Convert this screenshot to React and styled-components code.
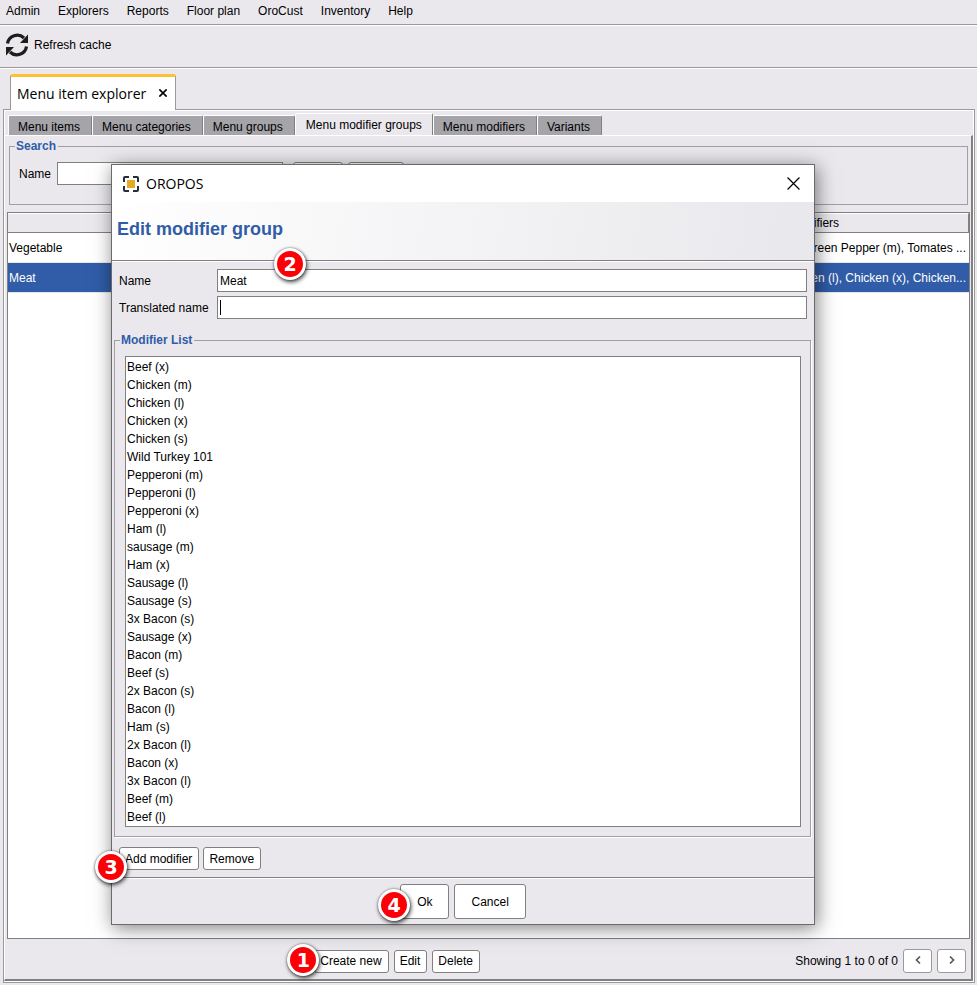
import React from "react";
import styled, { createGlobalStyle } from "styled-components";

const GlobalStyle = createGlobalStyle`
  * {
    box-sizing: border-box;
  }

  body {
    margin: 0;
    background-color: #eae8ed;
    color: #000;
    font-family: "Liberation Sans", Arial, sans-serif;
    font-size: 12px;
    line-height: 16px;
  }

  button,
  input {
    font: inherit;
    color: inherit;
  }
`;

const Screen = styled.div`
  position: relative;
  display: flex;
  flex-direction: column;
  min-height: 100vh;
`;

const MenuBar = styled.nav`
  display: flex;
  gap: 18px;
  height: 25px;
  padding: 2px 6px 4px;
  border-bottom: 1px solid #999;
`;

const MenuButton = styled.button`
  padding: 0;
  border: none;
  background: none;
`;

const Toolbar = styled.div`
  display: flex;
  align-items: center;
  height: 43px;
  padding: 0 6px 4px;
  border-top: 1px solid #fff;
  border-bottom: 1px solid #999;
`;

const ToolbarButton = styled.button`
  display: flex;
  align-items: center;
  gap: 6px;
  padding: 0;
  border: none;
  background: none;
`;

const ExplorerTabs = styled.div`
  display: flex;
  padding: 5px 10px 0;
  border-top: 1px solid #fff;
`;

const ExplorerTab = styled.div`
  z-index: 1;
  display: flex;
  align-items: center;
  gap: 13px;
  height: 36px;
  margin-bottom: -1px;
  padding: 0 8px 0 6px;
  border: 1px solid #999;
  border-top: 3px solid #fdc133;
  border-bottom: none;
  border-radius: 3px 3px 0 0;
  background-color: #fff;
  font-family: "Open Sans", "Noto Sans", sans-serif;
  font-size: 14px;
`;

const TabClose = styled.button`
  display: flex;
  padding: 0 0 2px;
  border: none;
  background: none;
`;

const ExplorerPanel = styled.div`
  flex: 1;
  display: flex;
  flex-direction: column;
  margin: 0 2px 2px 3px;
  padding-top: 3px;
  border: 1px solid #999;
  box-shadow: inset 1px 1px #fff, inset -1px -1px #fff;
`;

const TabList = styled.div`
  display: flex;
  align-items: flex-end;
  padding: 0 4px;
`;

const Tab = styled.button`
  height: ${({ $active }) => ($active ? "23px" : "20px")};
  margin-bottom: ${({ $active }) => ($active ? "-1px" : "0")};
  padding: ${({ $active }) => ($active ? "0 10px" : "2px 11px 0 9px")};
  border: 1px solid #fff;
  border-right-color: #808080;
  border-bottom: none;
  border-radius: 2px 2px 0 0;
  background-color: ${({ $active }) => ($active ? "#eae8ed" : "#a5a4a9")};
  white-space: nowrap;
`;

const TabPanel = styled.div`
  flex: 1;
  display: flex;
  flex-direction: column;
  margin: 0 1px 1px 0;
  padding: 3px 1px 0 2px;
  border: 1px solid #fff;
  border-right: 2px solid #808080;
  border-bottom: 2px solid #808080;
`;

const Group = styled.fieldset`
  min-width: 0;
  margin: ${({ $margin }) => $margin || "0"};
  padding: 0;
  border: 1px solid #a0a0a3;
  box-shadow: ${({ $etched }) => ($etched ? "1px 1px #fff" : "none")};
`;

const Legend = styled.legend`
  margin-left: 5px;
  padding: 0 2px 0 1px;
  color: #305ca8;
  font-weight: bold;
  line-height: 14px;
`;

const SearchRow = styled.div`
  display: flex;
  align-items: center;
  gap: 6px;
  padding: 9px 9px 19px;
`;

const TextField = styled.input`
  min-width: 0;
  width: ${({ $width }) => $width || "100%"};
  height: 23px;
  padding: 0 2px;
  border: 1px solid #808080;
  border-radius: 0;
  outline: none;
  background: #fff;
`;

/* Shows a still text cursor at the start of the empty field */
const CaretField = styled(TextField)`
  background: linear-gradient(#000, #000) 2px 3px / 1px 15px no-repeat #fff;
`;

const Button = styled.button`
  position: relative;
  height: ${({ $large }) => ($large ? "35px" : "23px")};
  min-width: ${({ $width }) => $width || "0"};
  padding: ${({ $large }) => ($large ? "0 16px" : "0 6px 0 5px")};
  border: 1px solid #808080;
  border-radius: 3px;
  background-color: #fff;
  white-space: nowrap;
`;

const SearchButtons = styled.div`
  display: flex;
  gap: 5px;
  margin-left: 4px;
`;

const TableFrame = styled.div`
  flex: 1;
  margin-top: 7px;
  border: 1px solid #808080;
  background-color: #fff;
`;

const Table = styled.table`
  width: 100%;
  table-layout: fixed;
  border-collapse: separate;
  border-spacing: 0;

  th {
    height: 20px;
    padding: 0;
    border-top: 1px solid #fff;
    border-right: 1px solid #808080;
    border-bottom: 1px solid #808080;
    background-color: #eae8ed;
    font-weight: normal;
  }

  th:last-child {
    width: 32%;
  }

  td {
    height: 30px;
    padding: 0 3px 0 1px;
    border-bottom: 1px solid #e8e8ec;
    white-space: nowrap;
  }

  td:last-child {
    text-align: right;
  }
`;

const Row = styled.tr`
  background-color: ${({ $selected }) => ($selected ? "#305ca8" : "#fff")};
  color: ${({ $selected }) => ($selected ? "#fff" : "#000")};
`;

const TableFooter = styled.div`
  display: flex;
  align-items: center;
  gap: 8px;
  height: 40px;
  padding: 4px 4px 0 0;
`;

const FooterActions = styled.div`
  flex: 1;
  display: flex;
  justify-content: center;
  gap: 5px;
`;

const Pager = styled.div`
  display: flex;
  align-items: center;
  gap: 5px;
`;

const PagerButton = styled.button`
  display: flex;
  align-items: center;
  justify-content: center;
  width: 29px;
  height: 24px;
  padding: 0 0 2px;
  border: 1px solid #9a9a9d;
  border-radius: 3px;
  background-color: #fff;
`;

const Badge = styled.span`
  position: absolute;
  left: ${({ $left }) => $left};
  top: ${({ $top }) => $top};
  z-index: 2;
  width: 32px;
  height: 32px;
  border: 3px solid #fff;
  border-radius: 50%;
  background-color: #fb0007;
  box-shadow: 1px 2px 4px rgba(0, 0, 0, 0.75), 0 0 2px rgba(0, 0, 0, 0.5);
  color: #fff;
  font-family: "DejaVu Sans", sans-serif;
  font-size: 19px;
  font-weight: bold;
  line-height: 26px;
  text-align: center;
`;

const Dialog = styled.section`
  position: absolute;
  left: 111px;
  right: 162px;
  top: 164px;
  border: 1px solid #6b6b6e;
  background-color: #eae8ed;
  box-shadow: 2px 3px 18px rgba(0, 0, 0, 0.5);
`;

const DialogTitleBar = styled.div`
  display: flex;
  align-items: center;
  gap: 7px;
  height: 37px;
  padding: 0 14px 0 11px;
  background-color: #fff;
  font-family: "Open Sans", "Noto Sans", sans-serif;
  font-size: 14px;
`;

const DialogClose = styled.button`
  display: flex;
  margin-left: auto;
  padding: 0;
  border: none;
  background: none;
`;

const DialogHeader = styled.header`
  position: relative;
  height: 59px;
  padding: 15px 5px;
  border-bottom: 1px solid #808080;
  background: linear-gradient(100deg, #fff 0%, #e9e8ec 95%);
  box-shadow: 0 1px #fff;
`;

const Heading = styled.h1`
  margin: 0;
  color: #305ca8;
  font-size: 18px;
  line-height: 24px;
`;

const DialogForm = styled.div`
  display: grid;
  grid-template-columns: 98px 1fr;
  align-items: center;
  row-gap: 4px;
  padding: 8px 7px 14px;
`;

const ModifierList = styled.ul`
  margin: 9px 9px 9px 10px;
  padding: 1px 1px 0;
  border: 1px solid #808080;
  background-color: #fff;
  list-style: none;
  line-height: 18px;
`;

const DialogActions = styled.div`
  position: relative;
  display: flex;
  gap: 4px;
  padding: 10px 7px 7px;
  border-bottom: 1px solid #808080;
  box-shadow: 0 1px #fff;
`;

const DialogFooter = styled.footer`
  display: flex;
  justify-content: center;
  gap: 5px;
  height: 46px;
  padding-top: 6px;
`;

const menus = ["Admin", "Explorers", "Reports", "Floor plan", "OroCust", "Inventory", "Help"];

const tabs = [
  "Menu items",
  "Menu categories",
  "Menu groups",
  "Menu modifier groups",
  "Menu modifiers",
  "Variants",
];

const groups = [
  { name: "Vegetable", modifiers: "Green Pepper (m), Tomates ..." },
  { name: "Meat", modifiers: "Chicken (l), Chicken (x), Chicken...", selected: true },
];

const modifiers = [
  "Beef (x)",
  "Chicken (m)",
  "Chicken (l)",
  "Chicken (x)",
  "Chicken (s)",
  "Wild Turkey 101",
  "Pepperoni (m)",
  "Pepperoni (l)",
  "Pepperoni (x)",
  "Ham (l)",
  "sausage (m)",
  "Ham (x)",
  "Sausage (l)",
  "Sausage (s)",
  "3x Bacon (s)",
  "Sausage (x)",
  "Bacon (m)",
  "Beef (s)",
  "2x Bacon (s)",
  "Bacon (l)",
  "Ham (s)",
  "2x Bacon (l)",
  "Bacon (x)",
  "3x Bacon (l)",
  "Beef (m)",
  "Beef (l)",
];

const RefreshIcon = () => (
  <svg width="22" height="24" viewBox="0 0 22 24" fill="none" aria-hidden="true">
    <path d="M1.5 10.5A9.8 9.8 0 0 1 18 5" stroke="#1d1d1b" strokeWidth="3.2" />
    <path d="M22 1.5V10H14Z" fill="#1d1d1b" />
    <path d="M20.5 13.5A9.8 9.8 0 0 1 4 19" stroke="#1d1d1b" strokeWidth="3.2" />
    <path d="M0 22.5V14H8Z" fill="#1d1d1b" />
  </svg>
);

const LogoIcon = () => (
  <svg width="16" height="16" viewBox="0 0 16 16" fill="none" aria-hidden="true">
    <path
      d="M1 6V2Q1 1 2 1H6M10 1H14Q15 1 15 2V6M15 10V14Q15 15 14 15H10M6 15H2Q1 15 1 14V10"
      stroke="#282d3a"
      strokeWidth="2"
    />
    <rect x="4" y="4" width="8" height="8" fill="#e1ac23" />
  </svg>
);

const CrossIcon = ({ size, weight }) => (
  <svg width={size} height={size} viewBox="0 0 12 12" fill="none" aria-hidden="true">
    <path d="M0.5 0.5L11.5 11.5M11.5 0.5L0.5 11.5" stroke="#000" strokeWidth={weight} />
  </svg>
);

const Chevron = ({ path }) => (
  <svg width="6" height="8" viewBox="0 0 6 8" fill="none" aria-hidden="true">
    <path d={path} stroke="#555" strokeWidth="1.6" />
  </svg>
);

const EditGroupDialog = () => {
  return (
    <Dialog role="dialog" aria-labelledby="dialog-heading">
      <DialogTitleBar>
        <LogoIcon />
        <span>OROPOS</span>
        <DialogClose type="button" aria-label="Close">
          <CrossIcon size={13} weight={1.1} />
        </DialogClose>
      </DialogTitleBar>
      <DialogHeader>
        <Heading id="dialog-heading">Edit modifier group</Heading>
        <Badge $left="162px" $top="46px">2</Badge>
      </DialogHeader>
      <DialogForm>
        <label htmlFor="group-name">Name</label>
        <TextField id="group-name" type="text" defaultValue="Meat" />
        <label htmlFor="translated-name">Translated name</label>
        <CaretField id="translated-name" type="text" />
      </DialogForm>
      <Group $margin="0 3px 0 2px" $etched>
        <Legend>Modifier List</Legend>
        <ModifierList>
          {modifiers.map((modifier) => (
            <li key={modifier}>{modifier}</li>
          ))}
        </ModifierList>
      </Group>
      <DialogActions>
        <Badge $left="-17px" $top="14px">3</Badge>
        <Button type="button">Add modifier</Button>
        <Button type="button">Remove</Button>
      </DialogActions>
      <DialogFooter>
        <Button type="button" $large>
          Ok
          <Badge $left="-23px" $top="4px">4</Badge>
        </Button>
        <Button type="button" $large>Cancel</Button>
      </DialogFooter>
    </Dialog>
  );
};

const App = () => {
  return (
    <>
      <GlobalStyle />
      <Screen>
        <MenuBar>
          {menus.map((menu) => (
            <MenuButton type="button" key={menu}>{menu}</MenuButton>
          ))}
        </MenuBar>
        <Toolbar>
          <ToolbarButton type="button">
            <RefreshIcon />
            Refresh cache
          </ToolbarButton>
        </Toolbar>
        <ExplorerTabs>
          <ExplorerTab>
            <span>Menu item explorer</span>
            <TabClose type="button" aria-label="Close tab">
              <CrossIcon size={8} weight={2.4} />
            </TabClose>
          </ExplorerTab>
        </ExplorerTabs>
        <ExplorerPanel>
          <TabList role="tablist">
            {tabs.map((tab) => (
              <Tab
                type="button"
                role="tab"
                key={tab}
                aria-selected={tab === "Menu modifier groups"}
                $active={tab === "Menu modifier groups"}
              >
                {tab}
              </Tab>
            ))}
          </TabList>
          <TabPanel role="tabpanel">
            <Group $margin="0 2px">
              <Legend>Search</Legend>
              <SearchRow>
                <label htmlFor="search-name">Name</label>
                <TextField id="search-name" type="text" $width="226px" />
                <SearchButtons>
                  <Button type="button" $width="50px" aria-label="Search" />
                  <Button type="button" $width="56px" aria-label="Clear" />
                </SearchButtons>
              </SearchRow>
            </Group>
            <TableFrame>
              <Table>
                <thead>
                  <tr>
                    <th aria-label="Name" />
                    <th aria-label="Translated name" />
                    <th>Modifiers</th>
                  </tr>
                </thead>
                <tbody>
                  {groups.map((group) => (
                    <Row key={group.name} $selected={group.selected}>
                      <td>{group.name}</td>
                      <td />
                      <td>{group.modifiers}</td>
                    </Row>
                  ))}
                </tbody>
              </Table>
            </TableFrame>
            <TableFooter>
              <FooterActions>
                <Button type="button">
                  Create new
                  <Badge $left="-28px" $top="-7px">1</Badge>
                </Button>
                <Button type="button">Edit</Button>
                <Button type="button">Delete</Button>
              </FooterActions>
              <Pager>
                <span>Showing 1 to 0 of 0</span>
                <PagerButton type="button" aria-label="Previous page">
                  <Chevron path="M5 0.5L1.5 4L5 7.5" />
                </PagerButton>
                <PagerButton type="button" aria-label="Next page">
                  <Chevron path="M1 0.5L4.5 4L1 7.5" />
                </PagerButton>
              </Pager>
            </TableFooter>
          </TabPanel>
        </ExplorerPanel>
      </Screen>
      <EditGroupDialog />
    </>
  );
};

export default App;
